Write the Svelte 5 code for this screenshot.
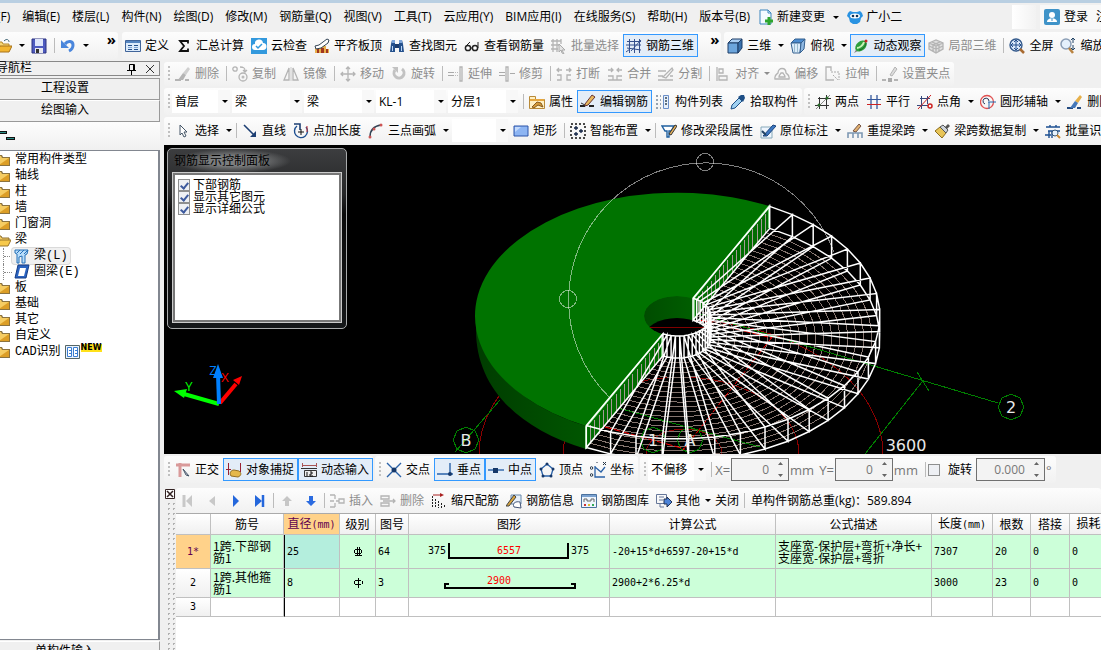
<script lang="ts">
	interface Tool {
		icon?: string,
		text?: string,
		on?: boolean,
		off?: boolean,
		drop?: boolean,
		sep?: boolean,
		combo?: string,
		size?: string
	}

	const menus = ["文件(F)", "编辑(E)", "楼层(L)", "构件(N)", "绘图(D)", "修改(M)", "钢筋量(Q)", "视图(V)", "工具(T)", "云应用(Y)", "BIM应用(I)", "在线服务(S)", "帮助(H)", "版本号(B)"]

	const sep: Tool = { sep: true }

	const quickBar: Tool[] = [
		{ icon: "page" },
		{ icon: "open", drop: true },
		{ icon: "save" },
		sep,
		{ icon: "undo", drop: true }
	]

	const mainBar: Tool[] = [
		{ icon: "define", text: "定义" },
		{ icon: "sum", text: "汇总计算" },
		{ icon: "cloud", text: "云检查" },
		{ icon: "level", text: "平齐板顶" },
		{ icon: "find", text: "查找图元" },
		{ icon: "glasses", text: "查看钢筋量" },
		{ icon: "batch", text: "批量选择", off: true },
		{ icon: "rebar3d", text: "钢筋三维", on: true }
	]

	const viewBar: Tool[] = [
		{ icon: "cube", text: "三维", drop: true },
		{ icon: "top", text: "俯视", drop: true },
		{ icon: "orbit", text: "动态观察", on: true },
		{ icon: "part", text: "局部三维", off: true },
		sep,
		{ icon: "full", text: "全屏" },
		{ icon: "zoom", text: "缩放" }
	]

	const editBar: Tool[] = [
		{ icon: "brush", text: "删除", off: true },
		sep,
		{ icon: "copy", text: "复制", off: true },
		{ icon: "mirror", text: "镜像", off: true },
		sep,
		{ icon: "move", text: "移动", off: true },
		{ icon: "rotate", text: "旋转", off: true },
		sep,
		{ icon: "extend", text: "延伸", off: true },
		{ icon: "trim", text: "修剪", off: true },
		sep,
		{ icon: "break", text: "打断", off: true },
		{ icon: "merge", text: "合并", off: true },
		{ icon: "split", text: "分割", off: true },
		sep,
		{ icon: "align", text: "对齐", off: true, drop: true },
		{ icon: "offset", text: "偏移", off: true },
		{ icon: "stretch", text: "拉伸", off: true },
		sep,
		{ icon: "grip", text: "设置夹点", off: true }
	]

	const partBar: Tool[] = [
		{ combo: "首层", size: "narrow" },
		{ combo: "梁" },
		{ combo: "梁" },
		{ combo: "KL-1" },
		{ combo: "分层1" },
		sep,
		{ icon: "props", text: "属性" },
		{ icon: "pencil", text: "编辑钢筋", on: true },
		{ icon: "list", text: "构件列表" },
		{ icon: "picker", text: "拾取构件" }
	]

	const axisBar: Tool[] = [
		{ icon: "twopoint", text: "两点" },
		{ icon: "parallel", text: "平行" },
		{ icon: "angle", text: "点角", drop: true },
		{ icon: "arcaxis", text: "圆形辅轴", drop: true },
		{ icon: "brushc", text: "删除辅轴" }
	]

	const drawBar: Tool[] = [
		{ icon: "cursor", text: "选择", drop: true },
		sep,
		{ icon: "line", text: "直线" },
		{ icon: "pointlen", text: "点加长度" },
		{ icon: "arc", text: "三点画弧", drop: true },
		{ combo: " ", size: "narrow" },
		{ icon: "rect", text: "矩形" },
		sep,
		{ icon: "smart", text: "智能布置", drop: true },
		sep,
		{ icon: "beamedit", text: "修改梁段属性" },
		{ icon: "note", text: "原位标注", drop: true },
		{ icon: "span", text: "重提梁跨", drop: true },
		{ icon: "sweep", text: "梁跨数据复制", drop: true },
		{ icon: "recog", text: "批量识别" }
	]

	const snapBar: Tool[] = [
		{ icon: "ortho", text: "正交" },
		{ icon: "snap", text: "对象捕捉", on: true },
		{ icon: "dyn", text: "动态输入", on: true }
	]

	const pointBar: Tool[] = [
		{ icon: "cross", text: "交点" },
		{ icon: "perp", text: "垂点", on: true },
		{ icon: "mid", text: "中点", on: true },
		{ icon: "vertex", text: "顶点" },
		{ icon: "coord", text: "坐标" }
	]

	const rebarBar: Tool[] = [
		{ icon: "first", off: true },
		{ icon: "prev", off: true },
		{ icon: "next" },
		{ icon: "last" },
		sep,
		{ icon: "up", off: true },
		{ icon: "down" },
		sep,
		{ icon: "insert", text: "插入", off: true },
		{ icon: "delrow", text: "删除", off: true },
		{ icon: "scale", text: "缩尺配筋" },
		{ icon: "info", text: "钢筋信息" },
		{ icon: "library", text: "钢筋图库" },
		{ icon: "other", text: "其他", drop: true },
		{ text: "关闭" },
		sep
	]

	const folders = ["常用构件类型", "轴线", "柱", "墙", "门窗洞", "梁", "板", "基础", "其它", "自定义", "CAD识别"]

	let checks = $state([
		{ text: "下部钢筋", value: true },
		{ text: "显示其它图元", value: true },
		{ text: "显示详细公式", value: true }
	])

	const columns = [
		{ text: "", width: 35 },
		{ text: "筋号", width: 73 },
		{ text: "直径", unit: "(mm)", width: 56 },
		{ text: "级别", width: 36 },
		{ text: "图号", width: 33 },
		{ text: "图形", width: 201 },
		{ text: "计算公式", width: 166 },
		{ text: "公式描述", width: 156 },
		{ text: "长度", unit: "(mm)", width: 61 },
		{ text: "根数", width: 38 },
		{ text: "搭接", width: 39 },
		{ text: "损耗", unit: "(%)", width: 56 }
	]

	const rows = [
		{ no: "1*", name: "1跨.下部钢\n筋1", dia: "25", grade: 3, shape: "64", formula: "-20+15*d+6597-20+15*d", desc: "支座宽-保护层+弯折+净长+\n支座宽-保护层+弯折", rest: ["7307", "20", "0", "0"] },
		{ no: "2", name: "1跨.其他箍\n筋1", dia: "8", grade: 1, shape: "3", formula: "2900+2*6.25*d", desc: "", rest: ["3000", "23", "0", "0"] }
	]

	// Slab with a hole: upper rim ellipse, hole ellipse and the thickness between top and bottom
	const CX = 678, CY = 316, RX = 202, RY = 123, HX = 33, HY = 20, DEPTH = 22

	const point = (deg: number, k: number, z: number): string => {
		const t = deg * Math.PI / 180
		const rx = HX + (RX - HX) * k
		const ry = HY + (RY - HY) * k
		return `${(CX + rx * Math.cos(t)).toFixed(1)} ${(CY + ry * Math.sin(t) + z).toFixed(1)}`
	}

	const angles = Array.from({ length: 25 }, (_, i) => -63 + i * 7.5)
	const ring = (k: number, z: number): string => "M" + angles.map(a => point(a, k, z)).join("L")

	const spokes = angles.map(a =>
		`M${point(a, 0, 0)}L${point(a, 1, 0)}L${point(a, 1, DEPTH)}L${point(a, 0, DEPTH)}Z`
	).join("")
	const rims = [[0, 0], [0, DEPTH], [1, 0], [1, DEPTH]].map(([k, z]) => ring(k, z)).join("")
	const stirrups = Array.from({ length: 20 }, (_, i) => ring((i + 1) / 21, DEPTH)).join("")

	const hatch = (x1: number, y1: number, x2: number, y2: number): string => {
		let d = ""
		for (let i = 1; i < 18; i++) {
			const x = Math.round(x1 + (x2 - x1) * i / 18)
			const y = Math.round(y1 + (y2 - y1) * i / 18)
			d += `M${x} ${y + 3}V${y + DEPTH}`
		}
		return d
	}

	const g = `fill="none" stroke="#b4b4b4" stroke-width="1.3"`
	const b = `fill="none" stroke="#1d4f91" stroke-width="1.4"`
	const brushShape = (c1: string, c2: string, c3: string) => `<path d="M0 14h6M10 14h4" stroke="${c3}" stroke-width="2"/><path d="M8 7l5-6 2 2-4 6z" fill="${c1}"/><path d="M8 7l3 2-3 5H3z" fill="${c2}"/>`

	const icons: { [name: string]: string } = {
		page: `<path d="M3 1h7l3 3v11H3z" fill="#fff" stroke="#789"/>`,
		open: `<path d="M1 14V4h5l1 2h6v3" fill="#f7d674" stroke="#b5862a"/><path d="M1 14l3-6h12l-3 6z" fill="#f2b530" stroke="#a87318"/><path d="M8 3c3-3 5-1 5 1" fill="none" stroke="#467"/>`,
		save: `<path d="M1 1h14v14H1z" fill="#4e5bc0" stroke="#2c3280"/><path d="M4 1h8v7H4z" fill="#dfe6fa"/><path d="M4 10h8v5H4z" fill="#e8e8f0"/><path d="M5 11h3v4H5z" fill="#333"/>`,
		undo: `<path d="M5 6c3-4 8-3 8 1 0 3-2 5-4 6" fill="none" stroke="#4a86dc" stroke-width="3"/><path d="M1 2v8h8z" fill="#4a86dc"/>`,
		define: `<path d="M.5 2.5h15v11H.5z" fill="#dcebfb" stroke="#41659a"/><path d="M1 3h14v2H1z" fill="#5585c0"/><path d="M3 7.500h4M3 11.500h4M9 7.500h4M9 11.500h4" stroke="#234f8a"/><path d="M3 9.500h4M9 9.500h4" stroke="#7fa6d6"/>`,
		sum: `<path d="M12 5.500V3H4l4 5-4 5h8v-2.500" fill="none" stroke="#111" stroke-width="1.8"/>`,
		cloud: `<path d="M0 0h16v16H0z" fill="#3399dd"/><path d="M4 12a3 3 0 010-6 4 4 0 018-1 3 3 0 010 7z" fill="#fff"/><path d="M5 8l2 2 4-4" fill="none" stroke="#39d" stroke-width="1.500"/>`,
		level: `<path d="M1 15V10l3-2h8v3h3v4z" fill="#e7b04b"/><path d="M3 15v-4h2v4M7 15v-5h3v5M12 15v-4h2v4" fill="#a2371f"/><path d="M1 8l4-1 8-6 2 1-1 3-7 5-5 1z" fill="#fff" stroke="#345"/>`,
		find: `<path d="M1 14l1-8 1-4h3v12zM10 14V2h3l1 4 1 8z" fill="#24508c"/><path d="M3 2h3v3H3zM10 2h3v3h-3z" fill="#7ba3d8"/><path d="M6 6h4v4H6z" fill="#1c3c6c"/><path d="M3.500 8v5M12.500 8v5" stroke="#b9d4f5"/>`,
		glasses: `<circle cx="4" cy="10" r="2.6" fill="#fff" stroke="#222" stroke-width="1.5"/><circle cx="11" cy="10" r="2.6" fill="#fff" stroke="#222" stroke-width="1.5"/><path d="M6 10h3M2 8l4-4M14 10V4" fill="none" stroke="#222"/>`,
		batch: `<path d="M0 3h10M0 7h8M0 11h7M2 1v13M6 1v13M10 1v5" ${g}/><path d="M8 6l6 6h-3l2 4-2-1-1-3-2 2z" fill="#e4e4e4" stroke="#aaa"/>`,
		rebar3d: `<path d="M1 3.500h14M1 10l14 2M3.500 1v14M8.500 1v14M13.500 1v14M0 14l4-3M5 13l10-11M0 7h15" fill="none" stroke="#35508c"/>`,
		cube: `<path d="M1 5l4-4h10l-4 4z" fill="#a9cdf2" stroke="#1d3d66"/><path d="M1 5h10v10H1z" fill="#6ca5dc" stroke="#1d3d66"/><path d="M11 5l4-4v9l-4 5z" fill="#3b71ab" stroke="#1d3d66"/>`,
		top: `<path d="M1 5l4-4h10l-4 4z" fill="#4c8cd0" stroke="#35608f"/><path d="M1 5h10l-1 10H3z" fill="#dcecfb" stroke="#35608f"/><path d="M11 5l4-4-1 10-4 4z" fill="#8fb8e2" stroke="#35608f"/><path d="M4.500 6v8M7.500 6v8" stroke="#9bc"/>`,
		orbit: `<path d="M1 15l3-5 3 2z" fill="#888"/><ellipse cx="8" cy="8" rx="6.500" ry="4.5" transform="rotate(-40 8 8)" fill="#2f9f3c"/><path d="M4 10c3 0 6-3 7-6" stroke="#c8f2b8" fill="none" stroke-width="2"/><path d="M6 12c3 0 7-4 7-7" stroke="#17632a" fill="none"/><circle cx="13" cy="3" r="1.500" fill="#c22"/>`,
		part: `<path d="M1 5l7-3 7 3v6l-7 4-7-4z" fill="#e0e0e0"/><path d="M1 5l7-3 7 3v6l-7 4-7-4zM1 5l7 3 7-3M8 8v7M1 8l7 3 7-3M4 4l7 3v7M12 4L5 7v6" ${g}/>`,
		full: `<circle cx="7" cy="7" r="6" fill="#dcebfc" stroke="#345a8c" stroke-width="1.4"/><path d="M7 2v10M2 7h10M5 4l2-2 2 2M5 10l2 2 2-2M4 5L2 7l2 2M10 5l2 2-2 2" stroke="#234f8c" fill="none"/><path d="M11 11l4 4" stroke="#a86a30" stroke-width="2.5"/>`,
		zoom: `<circle cx="6" cy="6" r="5" fill="#e4f0fc" stroke="#8a9db5" stroke-width="1.5"/><path d="M9 10l4 5" stroke="#b98340" stroke-width="2.5"/><path d="M13 0v5M11 2l2-2 2 2M13 7v5M11 10l2 2 2-2" stroke="#246" fill="none"/>`,
		brush: brushShape("#d0d0d0", "#b4b4b4", "#b4b4b4"),
		brushc: brushShape("#e6b04a", "#4477b8", "#234a80"),
		copy: `<circle cx="3" cy="3" r="2.2" ${g}/><circle cx="11" cy="11" r="4" ${g}/><circle cx="11" cy="11" r="1.5" fill="#bbb"/><path d="M8 1c4 0 5 1 5 4M11 4l2 2 2-2" ${g}/>`,
		mirror: `<path d="M6 2v12H1zM10 2v12h5z" ${g}/><path d="M8 1v14" stroke="#ccc"/>`,
		move: `<path d="M8 1v14M1 8h14M6 3l2-2 2 2M6 13l2 2 2-2M3 6L1 8l2 2M13 6l2 2-2 2" ${g}/>`,
		rotate: `<path d="M4 4a5 5 0 107-1" fill="none" stroke="#c2c2c2" stroke-width="3"/><path d="M1 1h6v6z" fill="#c2c2c2"/>`,
		extend: `<path d="M0 6.500h6M0 9.500h6" stroke="#aaa"/><path d="M7 6.500h3M7 9.500h3" stroke="#bbb" stroke-dasharray="1 1"/><path d="M12 1h2v14h-2z" ${g}/>`,
		trim: `<path d="M0 6.500h6M0 9.500h6M11 7.500h5" stroke="#aaa"/><path d="M7 1h2v14H7z" ${g}/>`,
		break: `<path d="M1 9h4v5H1M15 9h-4v5h4M1 4h5M15 4h-5M3 2L1 4l2 2M13 2l2 2-2 2" ${g}/>`,
		merge: `<path d="M1 14h14M1 10h5v4M15 10h-5v4M1 4h5M15 4h-5M4 2l2 2-2 2M12 2l-2 2 2 2" ${g}/>`,
		split: `<path d="M0 5h8M0 14h15M0 10h5M12 10h3M5 11l9-9 1 2-7 8z" ${g}/>`,
		align: `<path d="M2 1v14M4 3h4v4H4zM4 10h8v4H4z" ${g}/>`,
		offset: `<path d="M1 13c-1-4 2-5 3-6 0-6 8-6 8 0 1 1 4 2 3 6zM5 11c0-2 1-2 2-4h2c1 2 2 2 2 4z" ${g}/>`,
		stretch: `<path d="M9 14H1V1h5v4" ${g}/><path d="M6 6h8v8M8 9l5 5" fill="none" stroke="#aaa" stroke-dasharray="2 1"/>`,
		grip: `<path d="M0 14h4M12 14h4" stroke="#b4b4b4" stroke-width="2"/><path d="M6 12h4v4H6z" fill="#aaa"/><path d="M8 9l5-8 2 2-5 7z" fill="#ddd" stroke="#b4b4b4"/>`,
		props: `<path d="M.5 2.5h6v3h9v9H.5z" fill="#fff0c4" stroke="#b98a38"/><path d="M1 5h14v2H1z" fill="#e5a740"/><path d="M3 13l5-5 4 1 2 4-5-2-4 3z" fill="#d59b3c" stroke="#865a1b"/>`,
		pencil: `<path d="M0 12h5M9 12h5" stroke="#222" stroke-width="2"/><path d="M5 10l7-9 3 2-7 8-3 1z" fill="#e7b85c" stroke="#633"/><path d="M1 9l4 2" stroke="#333"/>`,
		list: `<path d="M1 2h2M1 6h2M1 10h2M1 14h2M5 2h1M5 6h1M5 10h1M5 14h1" stroke="#789" stroke-width="1.500"/><path d="M8.500 1.500h5v13h-5z" fill="#e7f0fb" stroke="#6a8fc9"/><path d="M10 4h2M10 7h2M10 10h2" stroke="#345" stroke-width="1.500"/>`,
		picker: `<path d="M1 15l1-4 7-7 3 3-7 7z" fill="#9fd0f0" stroke="#1e4f86"/><path d="M8 3l3-2h3l1 3-2 4z" fill="#1e4f86"/>`,
		twopoint: `<path d="M0 11.500h14M3 4.500h13M4.500 3v12M11.500 1v14" stroke="#333" fill="none"/><path d="M1 15L15 1" stroke="#888"/><circle cx="12" cy="4" r="1.500" fill="#286a28"/><circle cx="4" cy="11" r="1.500" fill="#286a28"/>`,
		parallel: `<path d="M5 1v14M11 1v14" stroke="#35589c" stroke-width="1.300"/><path d="M1 5.500h14" stroke="#35589c"/><path d="M1 10.500h14" stroke="#c22"/>`,
		angle: `<path d="M0 11.500h11M3 4.500h10M4.500 2v13M10.500 2v8" stroke="#35487c"/><path d="M1 15L14 1" stroke="#c22"/><circle cx="13" cy="12" r="2" fill="none" stroke="#c22" stroke-width="1.500"/>`,
		arcaxis: `<circle cx="7" cy="8" r="6.500" fill="none" stroke="#e05050" stroke-width="1.300"/><path d="M5 10a3 3 0 114-3" fill="none" stroke="#235"/><path d="M8 8h8M9 8v7" stroke="#26a"/>`,
		cursor: `<path d="M5 2v10l2-2 2 4 2-1-2-4h3z" fill="#fff" stroke="#456"/>`,
		line: `<path d="M2 2l10 10" stroke="#1d3f73" stroke-width="1.600"/><path d="M14 14H8l6-6z" fill="#1d3f73"/>`,
		pointlen: `<path d="M4 3a6.500 6.500 0 109 1" ${b}/><path d="M1 1h6v6" fill="none" stroke="#1d3f73" stroke-width="1.600"/><path d="M8 6v6M5 9h6" stroke="#111"/><path d="M14 3v6" stroke="#c33"/>`,
		arc: `<path d="M2 14C2 7 6 3 13 2" fill="none" stroke="#345" stroke-width="1.500"/><circle cx="2" cy="14" r="1.500" fill="#c55"/><circle cx="6" cy="6" r="1.500" fill="#c55"/><circle cx="13" cy="2" r="1.500" fill="#c55"/>`,
		rect: `<path d="M1 3h14v10H1z" fill="#8db5f3" stroke="#2c55a8"/><path d="M2 4h6l-6 5z" fill="#c3dafc"/>`,
		smart: `<path d="M1 1h14v14H1z" fill="none" stroke="#111" stroke-dasharray="2 2" stroke-width="1.500"/><path d="M6 3v4M4 5h4M11 6v4M9 8h4M6 9v4M4 11h4" stroke="#124" stroke-width="1.300"/>`,
		beamedit: `<path d="M1 3h12l-3 5H8v6H6V8H4z" fill="#fff" stroke="#1e5f9f" stroke-width="1.400"/><path d="M8 11l6-9 2 1-6 9z" fill="#e8b35c" stroke="#333"/>`,
		note: `<path d="M1 4h11v11H1z" fill="#eef5fd" stroke="#8ab"/><path d="M3 13L13 2l3 1L7 13z" fill="#3d78c2" stroke="#1a437c"/><path d="M2 8l4 4" stroke="#246" stroke-width="2"/>`,
		span: `<path d="M1 15v-5h14v5M6 10v5M11 10v5" fill="none" stroke="#7d98b3" stroke-width="1.600"/><path d="M6 8l6-7 2 2-5 6z" fill="#e0b070" stroke="#754"/>`,
		sweep: `<path d="M1 8l5-4 6 6-4 5z" fill="#e8c558" stroke="#8b6d1c"/><path d="M6 4l3-2 5 5-2 3z" fill="#ccd3da" stroke="#555"/><path d="M11 4l3-3 2 2-3 3z" fill="#555"/>`,
		recog: `<path d="M1 4h14M3 8h12M0 12h6M5 2v2M11 2v2M4 8v7M7 8v7" ${b}/><circle cx="10" cy="10" r="3" fill="#e6f2fd" stroke="#357"/><path d="M12 12l3 3" stroke="#c83" stroke-width="2"/>`,
		ortho: `<path d="M1 3h14M5 1v14" stroke="#d99a9a" stroke-width="3"/><path d="M8 7l6 7-3-1z" fill="#dde" stroke="#456"/>`,
		snap: `<path d="M2.500 1v12M14.500 1v9M0 7.500h5" stroke="#923"/><path d="M5 14c-2-3 0-6 3-6l5 1c3 2 2 5-1 6z" fill="#e5b84a" stroke="#957024"/>`,
		dyn: `<path d="M1.500 1v4M15.500 1v4M1 3.500h14" stroke="#a55"/><path d="M0 6.500h16M3.500 8.500h12v6h-12z" fill="#eee" stroke="#333"/><path d="M6 10v4M9 10h2v2H9v2h3" fill="none" stroke="#111"/>`,
		cross: `<path d="M1 1l14 14M15 1L1 15" stroke="#2a62a8" stroke-width="1.400"/><circle cx="8" cy="8" r="2.500" fill="#16386a"/>`,
		perp: `<path d="M0 12h16M13 1v11" stroke="#2a62a8" stroke-width="1.400"/><circle cx="13" cy="12" r="2" fill="#16386a"/>`,
		mid: `<path d="M0 8h16" stroke="#2a62a8" stroke-width="1.400"/><path d="M5 6h5v5H5z" fill="#16386a"/>`,
		vertex: `<path d="M8 2l6 5-2 7H4L2 7z" fill="none" stroke="#2a62a8" stroke-width="1.300"/><circle cx="8" cy="2" r="1.500" fill="#16386a"/><circle cx="14" cy="7" r="1.500" fill="#16386a"/><circle cx="12" cy="14" r="1.500" fill="#16386a"/><circle cx="4" cy="14" r="1.500" fill="#16386a"/><circle cx="2" cy="7" r="1.500" fill="#16386a"/>`,
		coord: `<path d="M5 4v11h10M5 5l6 5 4-5" fill="none" stroke="#2a62a8" stroke-width="1.300"/><circle cx="1.500" cy="6" r="1.300" fill="none" stroke="#234"/><circle cx="1.500" cy="13" r="1.300" fill="none" stroke="#234"/><path d="M6 0h2M13 0l3 3M16 0l-3 3" stroke="#234"/>`,
		first: `<path d="M4 2v12" stroke="#c8c8c8" stroke-width="3"/><path d="M12 2v12L6 8z" fill="#c8c8c8"/>`,
		prev: `<path d="M11 3v10L5 8z" fill="#c8c8c8"/>`,
		next: `<path d="M5 2v12l6-6z" fill="#2467dc"/>`,
		last: `<path d="M3 2v12l7-6z" fill="#2467dc"/><path d="M11 2v12" stroke="#2467dc" stroke-width="2.500"/>`,
		up: `<path d="M8 3l5 5h-3v5H6V8H3z" fill="#c6c6c6"/>`,
		down: `<path d="M8 13L3 8h3V3h4v5h3z" fill="#2b6be0"/>`,
		insert: `<path d="M1 2h5M1 14h5M1 8h4M7 8h3M10 6h5v4h-5zM6 2v4M6 10v4" ${g}/>`,
		delrow: `<path d="M1 3h8v3H1zM1 10h8v3H1zM3 8h12M13 6l2 2-2 2" ${g}/>`,
		scale: `<path d="M1.500 3v12M4.500 6v9M7.500 8v7M10.500 10v5M13.500 12v3" stroke="#222" stroke-dasharray="2 1"/><path d="M2 2h9" stroke="#a22"/><path d="M9 0l4 2-4 2z" fill="#a22"/>`,
		info: `<path d="M5 2h10v9H5z" fill="#e8f1fb" stroke="#68a"/><path d="M8 14c-2-4 2-6 6-5l1 6z" fill="#fff" stroke="#457"/><path d="M0 13L8 2l2 2-7 9z" fill="#d8a53e" stroke="#444"/>`,
		library: `<path d="M.5 1.500h15v13H.5z" fill="#eef5fd" stroke="#4b719e"/><path d="M1 2h14v2H1z" fill="#7ba2d0"/><path d="M3 9V6h3v2h4V6h3v3" fill="none" stroke="#666"/><path d="M3 12h2" stroke="#c33" stroke-width="2"/><path d="M7 12h2" stroke="#db3" stroke-width="2"/><path d="M11 12h2" stroke="#3a5" stroke-width="2"/>`,
		other: `<path d="M.5 1.500h10v9H.5zM3 4h5M3 7h4M4 11v3h4" fill="none" stroke="#679"/><path d="M8 6h3V4l5 5-5 5v-3H8z" fill="#4c83d8" stroke="#235"/>`,
		newdoc: `<path d="M2 1h8l3 3v11H2z" fill="#f4faff" stroke="#3c86be"/><path d="M10 1v3h3" fill="none" stroke="#3c86be"/><path d="M11 8v8M7 12h8" stroke="#2da52d" stroke-width="3"/>`,
		robot: `<path d="M0 7l1-3 2-2 3 1h4l3-1 2 2 1 3-2 2-1 4-3 2H6l-3-2-1-4z" fill="#2a93e2"/><ellipse cx="8" cy="7" rx="5" ry="2.500" fill="#fff"/><circle cx="6" cy="7" r="1.300" fill="#135"/><circle cx="10" cy="7" r="1.300" fill="#135"/>`,
		user: `<rect width="16" height="16" rx="2" fill="#3f93c8"/><circle cx="8" cy="6" r="3" fill="#fff"/><path d="M3 13c0-5 10-5 10 0z" fill="#fff"/><path d="M8 9v3" stroke="#3f93c8"/>`,
		folder: `<path d="M0 3h7l1 2h7v9H0z" fill="#8b7340"/><path d="M0 4h6l1 2h7v7H0z" fill="#f5cc62"/><path d="M14 6v7H4z" fill="#dc9e26"/>`,
		folderopen: `<path d="M1 13V4h5l1 2h7v2" fill="#f4cd66" stroke="#8b6d2c"/><path d="M1 14l4-6h11l-3 6z" fill="#f7c94b" stroke="#9a762a"/>`,
		beam: `<path d="M1 2l13 0-1 4-2 1v8H8V8L5 9v6H3V6L1 5z" fill="#b9ddfa" stroke="#2470b8"/><path d="M3 5l3-3M6 6l4-4M10 6l4-4" stroke="#2470b8"/>`,
		ringbeam: `<path d="M4 1h11l-3 13H1z" fill="#2a63c0" stroke="#143c86"/><path d="M6 4h6l-2 8H4z" fill="#fff"/>`,
		cad: `<path d="M.5 1.500h14v13H.5z" fill="#eaf3fe" stroke="#566"/><path d="M2.500 3.500h4v9h-4zM8.500 3.500h4v9h-4z" fill="#fff" stroke="#3a7dd0"/><path d="M4 6.500h2M4 9.500h2M10 6.500h2M10 9.500h2" stroke="#3a7dd0"/>`
	}
</script>

{#snippet icon(name: string)}
	<svg class="icon" viewBox="0 0 16 16" aria-hidden="true">{@html icons[name]}</svg>
{/snippet}

{#snippet arrow()}
	<svg class="arrow" viewBox="0 0 6 3" aria-hidden="true"><path d="M0 0h6L3 3z" fill="currentColor" /></svg>
{/snippet}

{#snippet combo(value: string, size: string)}
	<span class="combo {size}">
		<select aria-label={value}><option>{value}</option></select>
		{@render arrow()}
	</span>
{/snippet}

{#snippet tools(items: Tool[])}
	{#each items as item}
		{#if item.sep}
			<span class="sep"></span>
		{:else if item.combo}
			{@render combo(item.combo, item.size ?? "")}
		{:else}
			<button class="tool" class:on={item.on} class:off={item.off} aria-label={item.text ?? item.icon}>
				{#if item.icon}{@render icon(item.icon)}{/if}
				{#if item.text}<span>{item.text}</span>{/if}
			</button>
			{#if item.drop}
				<span class="drop" class:off={item.off}>{@render arrow()}</span>
			{/if}
		{/if}
	{/each}
{/snippet}

{#snippet spin(label: string, value: string, wide: boolean)}
	<span class="spin" class:wide>
		<input type="text" {value} aria-label={label} />
		<svg viewBox="0 0 7 17" aria-hidden="true"><path d="M1 4h5L3.500 1zM1 13h5L3.500 16z" fill="#666" /></svg>
	</span>
{/snippet}

<div class="window">
	<nav class="menu">
		<div class="menus">
			{#each menus as menu}
				<button>{menu}</button>
			{/each}
		</div>
		<button>{@render icon("newdoc")}新建变更</button>
		<span class="drop">{@render arrow()}</span>
		<button>{@render icon("robot")}广小二</button>
		<span class="blank"></span>
		<div class="login">{@render icon("user")}<a href="#login">登录</a><a href="#register">注册</a></div>
	</nav>

	<div class="row first">
		<div class="bar quick">{@render tools(quickBar)}<span class="more">»</span></div>
		<div class="bar main">{@render tools(mainBar)}<span class="more">»</span></div>
		<div class="bar grow">{@render tools(viewBar)}</div>
	</div>

	<div class="body">
		<aside>
			<header>
				<span>导航栏</span>
				<svg viewBox="0 0 30 12" aria-hidden="true"><path d="M3.500 7V1.500h5V7M1 7.500h9M5.500 8v4M7.500 2v5" stroke="#000" fill="none" /><path d="M20 2l8 8M28 2l-8 8" stroke="#333" /></svg>
			</header>
			<button class="section">工程设置</button>
			<button class="section">绘图输入</button>
			<div class="modes">
				<svg viewBox="0 0 20 12" aria-hidden="true"><path d="M0 1h11v3H0zM10 7h9v3h-9z" fill="#111" /><path d="M1 2h9v1H1zM11 8h7v1h-7z" fill="#2b8f88" /></svg>
			</div>
			<ul class="tree">
				{#each folders as folder}
					<li>
						{@render icon(folder == "梁" ? "folderopen" : "folder")}<span>{folder}</span>
						{#if folder == "CAD识别"}
							{@render icon("cad")}<b>NEW</b>
						{/if}
					</li>
					{#if folder == "梁"}
						<li class="child"><button class="picked">{@render icon("beam")}<span>梁(L)</span></button></li>
						<li class="child"><button>{@render icon("ringbeam")}<span>圈梁(E)</span></button></li>
					{/if}
				{/each}
			</ul>
			<button class="section last">单构件输入</button>
		</aside>

		<main>
			<div class="row edit"><div class="bar"><i class="grip"></i>{@render tools(editBar)}</div></div>
			<div class="row">
				<div class="bar"><i class="grip"></i>{@render tools(partBar)}</div>
				<div class="bar grow after"><i class="grip"></i>{@render tools(axisBar)}</div>
			</div>
			<div class="row"><div class="bar grow"><i class="grip"></i>{@render tools(drawBar)}</div></div>

			<div class="view">
				<svg viewBox="164 145 937 309" preserveAspectRatio="xMinYMin slice" role="img" aria-label="钢筋三维">
					<defs>
						<clipPath id="hole"><ellipse cx="677" cy="316" rx="33" ry="20" /></clipPath>
						<clipPath id="solid"><path d="M630 280H694V360H630z" /></clipPath>
						<linearGradient id="wall"><stop offset="0" stop-color="#004c00" /><stop offset="1" stop-color="#006400" /></linearGradient>
						<linearGradient id="side"><stop offset="0" stop-color="#003c00" /><stop offset="1" stop-color="#005600" /></linearGradient>
					</defs>
					<g fill="none" stroke="#8b0000" shape-rendering="crispEdges">
						<ellipse cx="681" cy="454" rx="202" ry="134" />
						<ellipse cx="681" cy="454" rx="118" ry="77" />
						<ellipse cx="684" cy="454" rx="38" ry="25" />
					</g>
					<path d={stirrups} fill="none" stroke="#85756f" stroke-width="1" shape-rendering="crispEdges" />
					<g fill="none" stroke="#008000" shape-rendering="crispEdges">
						<path d="M455 452L500 400M700 314L998 403M922 382L865 454M917 372l12 19M614 407L760 447" />
						<path d="M466 427l9 4 4 9-4 9-9 4-9-4-4-9 4-9zM653 427l9 4 4 9-4 9-9 4-9-4-4-9 4-9zM690 427l9 4 4 9-4 9-9 4-9-4-4-9 4-9zM1011 394l9 4 4 9-4 9-9 4-9-4-4-9 4-9z" />
					</g>
					<path d="M773 336L683 450M605 427L685 449M700 320L772 338" fill="none" stroke="#f00" stroke-dasharray="7 2" />
					<path d="M476 316A202 123 0 0 0 586 426V449C515 428 476 385 476 330z" fill="url(#side)" />
					<path d="M769 206A202 123 0 1 0 586 426L662 335L693 298z" fill="#007300" />
					<g clip-path="url(#hole)">
						<ellipse cx="677" cy="316" rx="33" ry="20" clip-path="url(#solid)" fill="url(#wall)" />
						<ellipse cx="677" cy="338" rx="33" ry="20" />
					</g>
					<path d="M769 206V228L694 320V298zM662 335V357L586 449V427z" fill="#006b00" />
					<path d={hatch(769, 206, 694, 298) + hatch(662, 335, 586, 427)} stroke="#a59b96" shape-rendering="crispEdges" />
					<path d="M694 320V298L769 206V228M662 357V335L586 427V449" fill="none" stroke="#a0f0a0" stroke-width="1.500" />
					<path d="M650 327.500H706" stroke="#800000" />
					<path d={spokes + rims} fill="none" stroke="#fff" stroke-width="1.500" />
					<g fill="none" stroke="#fff" stroke-opacity=".5" shape-rendering="crispEdges">
						<path d="M834 252A137 137 0 1 0 610 398" />
						<circle cx="705" cy="162" r="8.500" />
						<circle cx="568" cy="299" r="8.500" />
					</g>
					<g class="labels">
						<text x="466" y="446">B</text>
						<text x="653" y="446">1</text>
						<text x="690" y="446">A</text>
						<text x="1011" y="413">2</text>
						<text x="906" y="451">3600</text>
					</g>
					<g stroke-width="4">
						<path d="M219 404L184 394" stroke="#0f0" /><path d="M174 391l13-2-3 9z" fill="#0f0" />
						<path d="M220 403L236 384" stroke="#f00" /><path d="M242 376l-9 4 6 5z" fill="#f00" />
						<path d="M219 404L218 374" stroke="#0080ff" /><path d="M218 364l-5 14h10z" fill="#0080ff" />
					</g>
					<g class="axes"><text x="189" y="391" fill="#0f0">Y</text><text x="213" y="375" fill="#0080ff">Z</text><text x="225" y="382" fill="#f00">X</text></g>
				</svg>
				<section class="panel">
					<h2>钢筋显示控制面板</h2>
					<div class="checks">
						{#each checks as check}
							<label><input type="checkbox" bind:checked={check.value} />{check.text}</label>
						{/each}
					</div>
				</section>
			</div>

			<div class="row snap">
				<div class="bar"><i class="grip"></i>{@render tools(snapBar)}</div>
				<div class="bar after"><i class="grip"></i>{@render tools(pointBar)}</div>
				<div class="bar after">
					<i class="grip"></i>{@render combo("不偏移", "narrow")}<span class="sep"></span>
					<span class="gray">X=</span>{@render spin("X", "0", false)}<span class="gray">mm</span>
					<span class="gray">Y=</span>{@render spin("Y", "0", false)}<span class="gray">mm</span>
					<span class="sep"></span>
					<label class="turn"><input type="checkbox" />旋转</label>
					{@render spin("旋转", "0.000", true)}<span class="gray">°</span>
				</div>
			</div>

			<div class="rebar">
				<div class="splitter">
					<svg viewBox="0 0 10 10" aria-hidden="true"><path d="M.5.500h9v9h-9z" fill="#fff" stroke="#322" /><path d="M2 2l6 6M8 2L2 8" stroke="#322" stroke-width="1.500" /></svg>
					<div class="dots"></div>
				</div>
				<div class="sheet">
					<div class="bar nav">{@render tools(rebarBar)}<span class="total">单构件钢筋总重(kg)：589.894</span></div>
					<div class="grid">
						<table>
							<colgroup>
								{#each columns as column}<col style="width: {column.width}px" />{/each}
							</colgroup>
							<thead>
								<tr>
									{#each columns as column, i}
										<th class:hot={i == 2}>{column.text}{#if column.unit}<span class="mono">{column.unit}</span>{/if}</th>
									{/each}
								</tr>
							</thead>
							<tbody>
								{#each rows as row, i}
									<tr class="filled" class:tall={i == 0}>
										<th class="mono" class:hot={i == 0}>{row.no}</th>
										<td class="name">{row.name}</td>
										<td class="mono edge" class:current={i == 0}>{row.dia}</td>
										<td class="grade">
											<svg viewBox="0 0 12 12" role="img" aria-label="级别"><path d={row.grade == 3 ? "M3 3.5h6M3 7.5h6M2.5 4v3M9.500 4v3M5.500 1v9M7.500 1v9M3 9.500h7" : "M3 3.500h6M3 7.500h6M2.500 4v3M10.500 4v3M6.500 1v10"} fill="none" stroke="#000" /></svg>
										</td>
										<td class="mono">{row.shape}</td>
										<td class="shape">
											<svg viewBox="0 0 200 28">
												{#if i == 0}
													<path d="M40 5V20H159V5" fill="none" stroke="#000" stroke-width="2" />
													<text x="28" y="16">375</text>
													<text x="100" y="16" class="red">6557</text>
													<text x="171" y="16">375</text>
												{:else}
													<path d="M40 15H36V19H166V15H162" fill="none" stroke="#000" stroke-width="2" />
													<text x="90" y="15" class="red">2900</text>
												{/if}
											</svg>
										</td>
										<td class="mono">{row.formula}</td>
										<td class="desc">{row.desc}</td>
										{#each row.rest as value}
											<td class="mono">{value}</td>
										{/each}
									</tr>
								{/each}
								<tr>
									<th class="mono">3</th>
									{#each columns.slice(1) as _, i}
										<td class:edge={i == 1}></td>
									{/each}
								</tr>
							</tbody>
						</table>
					</div>
				</div>
			</div>
		</main>
	</div>
</div>

<style>
	:global(body) {
		background: #f0f0f0;
		overflow: hidden;
	}

	/* the window sits partly past the left edge of the screen */
	.window {
		margin-left: -30px;
		height: 100vh;
		display: flex;
		flex-direction: column;
		overflow: hidden;
		box-sizing: border-box;
		border-top: 3px solid #b9cfe2;
		font: 12px/16px "Open Sans", "Noto Sans CJK SC", sans-serif;
		color: #000;
		white-space: nowrap;
	}

	button,
	input,
	select {
		font: inherit;
		color: inherit;
		margin: 0;
	}

	button {
		background: none;
		border: 0;
		padding: 0;
	}

	.icon {
		width: 16px;
		height: 16px;
		flex: none;
	}

	.arrow {
		width: 6px;
		height: 3px;
		flex: none;
	}

	.menu {
		display: flex;
		align-items: center;
		height: 28px;
		flex: none;
		padding-left: 3px;
		gap: 8px;
	}

	.menus {
		display: flex;
		gap: 12px;
	}

	.menu button {
		display: flex;
		align-items: center;
		gap: 3px;
		flex: none;
	}

	.menu .drop {
		width: 6px;
	}

	.blank {
		width: 24px;
		height: 24px;
		margin-left: auto;
		background: linear-gradient(90deg, #fff, #f2f2f2);
		flex: none;
	}

	.login {
		display: flex;
		align-items: center;
		gap: 4px;
		width: 57px;
		height: 24px;
		padding-left: 4px;
		margin-left: -4px;
		background: #f8f8f8;
		overflow: hidden;
		flex: none;
	}

	.login a {
		color: #000;
		text-decoration: none;
		margin-right: 4px;
	}

	.row {
		display: flex;
		height: 29px;
		flex: none;
		align-items: center;
		overflow: hidden;
	}

	.row.edit {
		height: 27px;
	}

	.row.snap {
		height: 31px;
	}

	.bar {
		display: flex;
		align-items: center;
		height: 27px;
		flex: none;
		background: linear-gradient(#fdfdfd, #f1f1f1);
		border-radius: 3px;
	}

	.edit .bar {
		height: 24px;
	}

	.bar.grow {
		flex: 1 0 auto;
	}

	.bar.after {
		margin-left: 2px;
	}

	.bar.quick {
		width: 148px;
		margin-right: 4px;
	}

	.bar.main {
		margin-right: 3px;
	}

	.quick .more {
		margin-left: auto;
		padding-right: 2px;
	}

	.more {
		padding: 0 2px 14px 12px;
		font-size: 15px;
		font-weight: bold;
	}

	.grip {
		width: 2px;
		height: 15px;
		margin: 0 2px 0 4px;
		background: repeating-linear-gradient(#c0c0c0 0 2px, transparent 2px 4px);
	}

	.tool {
		display: flex;
		align-items: center;
		gap: 4px;
		height: 23px;
		padding: 0 3px 0 2px;
		border: 1px solid transparent;
		flex: none;
	}

	.tool.on {
		border-color: #3399ff;
		background: #e3edf8;
	}

	.off {
		color: #8d8d8d;
	}

	.drop {
		display: flex;
		justify-content: center;
		width: 12px;
		flex: none;
	}

	.drop.off {
		width: 8px;
	}

	.sep {
		width: 1px;
		height: 15px;
		margin: 0 2px 0 3px;
		background: #bbb;
		flex: none;
	}

	.drop + .sep {
		margin-left: 1px;
	}

	.combo {
		display: grid;
		align-items: center;
		width: 70px;
		height: 23px;
		margin-right: 2px;
		background: #fff;
		flex: none;
	}

	.combo.narrow {
		width: 58px;
	}

	.drop + .combo.narrow {
		width: 56px;
	}

	.combo > :global(*) {
		grid-area: 1 / 1;
	}

	.combo select {
		appearance: none;
		width: 100%;
		height: 23px;
		padding: 0 12px 0 3px;
		border: 0;
		background: linear-gradient(90deg, #fff, #fff) 0 0 / calc(100% - 12px) 100% no-repeat, #f8f8f8;
	}

	.combo .arrow {
		justify-self: end;
		margin-right: 2px;
		pointer-events: none;
	}

	.body {
		display: flex;
		flex: 1;
		min-height: 0;
	}

	aside {
		display: flex;
		flex-direction: column;
		width: 190px;
		margin-right: 4px;
		padding-top: 1px;
		box-sizing: border-box;
		flex: none;
		font-family: "Liberation Mono", "Noto Sans CJK SC", monospace;
	}

	aside header {
		display: flex;
		align-items: center;
		justify-content: space-between;
		height: 13px;
		padding: 0 3px 0 25px;
		border: 1px solid #888;
	}

	aside header svg {
		width: 30px;
		height: 12px;
	}

	.section {
		height: 22px;
		border: 1px solid #999;
		border-top-color: #fff;
		background: #f0f0f0;
		flex: none;
	}

	header + .section {
		margin-top: 2px;
		border-top-color: #999;
	}

	.modes {
		height: 28px;
		padding: 0 26px;
		background: linear-gradient(#fdfdfd, #f0f0f0);
		display: flex;
		align-items: center;
		flex: none;
	}

	.modes svg {
		width: 20px;
		height: 12px;
	}

	.tree {
		flex: 1;
		margin: 0;
		padding: 1px 0 0 24px;
		list-style: none;
		background: #fff;
		border: 1px solid #828790;
		border-right-width: 2px;
		overflow: hidden;
	}

	.tree li {
		display: flex;
		align-items: center;
		gap: 4px;
		height: 16px;
	}

	.tree .child {
		margin-left: 8px;
		border-left: 1px dotted #888;
	}

	.tree .child::before {
		content: "";
		width: 8px;
		border-top: 1px dotted #888;
	}

	.child button {
		display: flex;
		align-items: center;
		gap: 4px;
		height: 16px;
		margin-left: -4px;
		padding: 0 2px;
	}

	.child .picked {
		border-radius: 3px;
		background: #f0f0f0;
		box-shadow: 0 0 0 1px #dadada;
	}

	.tree b {
		font: bold 8px/8px "DejaVu Sans", sans-serif;
		background: #ffe11a;
		align-self: flex-start;
		margin-left: -4px;
	}

	.section.last {
		margin-top: 1px;
		height: 22px;
		margin-bottom: -13px;
	}

	main {
		display: flex;
		flex-direction: column;
		flex: 1;
		min-width: 0;
	}

	.view {
		position: relative;
		flex: 1;
		min-height: 0;
		background: #000;
		overflow: hidden;
	}

	.view > svg {
		display: block;
		width: 100%;
		height: 100%;
	}

	.labels text {
		font: 16px "DejaVu Sans", sans-serif;
		fill: #e8e8e8;
		text-anchor: middle;
	}

	.axes text {
		font: 13px "Open Sans", sans-serif;
		text-anchor: middle;
	}

	.panel {
		position: absolute;
		left: 3px;
		top: 3px;
		display: flex;
		flex-direction: column;
		width: 180px;
		height: 181px;
		padding: 0 5px 6px;
		box-sizing: border-box;
		border: 1px solid #a9abac;
		border-radius: 5px;
		background: linear-gradient(#3c3d3f, #262728 45px, #0a0a0a 65px, #151719);
	}

	.panel h2 {
		margin: 0;
		padding: 0 1px;
		font: 12px/24px "Open Sans", "Noto Sans CJK SC", sans-serif;
		background: radial-gradient(closest-side, #7d7f80 40%, transparent) 0 0 / 118px 24px no-repeat;
	}

	.checks {
		flex: 1;
		padding: 4px 3px;
		border: 2px solid #777;
		outline: 1px solid #ccc;
		background: #fff;
	}

	.checks label {
		display: flex;
		align-items: center;
		gap: 3px;
		height: 12px;
	}

	input[type="checkbox"] {
		appearance: none;
		display: grid;
		width: 12px;
		height: 12px;
		border: 1px solid #8e8f8f;
		box-sizing: border-box;
		background: #eef0f4;
	}

	input[type="checkbox"]:checked::after {
		content: "";
		width: 3px;
		height: 6px;
		margin: auto;
		border: solid #3d5a9e;
		border-width: 0 2px 2px 0;
		transform: rotate(40deg);
	}

	.gray {
		color: #777;
		font-size: 13px;
		padding: 0 1px;
	}

	.spin {
		display: flex;
		align-items: center;
		width: 58px;
		height: 23px;
		box-sizing: border-box;
		border: 1px solid #707070;
		background: #f3f3f3;
	}

	.spin.wide {
		width: 69px;
	}

	.spin input {
		width: 100%;
		min-width: 0;
		padding: 0 8px 0 0;
		border: 0;
		background: none;
		text-align: right;
		color: #777;
	}

	.spin svg {
		width: 7px;
		height: 17px;
		margin-right: 4px;
		flex: none;
	}

	.spin + .gray {
		padding-right: 4px;
	}

	.turn {
		display: flex;
		align-items: center;
		gap: 8px;
		padding-right: 4px;
	}

	.rebar {
		display: flex;
		height: 165px;
		flex: none;
	}

	.splitter {
		width: 12px;
		padding-top: 4px;
		flex: none;
	}

	.splitter svg {
		display: block;
		width: 10px;
		height: 10px;
		margin-left: 1px;
	}

	.dots {
		height: 150px;
		margin: 2px 0 0 2px;
		background: radial-gradient(circle, #b0b0b0 1px, transparent 1px) 0 0 / 5px 5px;
	}

	.sheet {
		display: flex;
		flex-direction: column;
		flex: 1;
		min-width: 0;
		padding-top: 3px;
	}

	.bar.nav {
		height: 25px;
	}

	.nav .tool:not(:has(span)) {
		padding: 0 3px;
	}

	.nav .sep {
		margin: 0 1px;
	}

	.nav .drop {
		width: 8px;
	}

	.total {
		padding-left: 5px;
	}

	.grid {
		flex: 1;
		background: #fff;
		border-top: 1px solid #aaa;
		overflow: hidden;
	}

	table {
		width: 950px;
		table-layout: fixed;
		border-collapse: separate;
		border-spacing: 0;
		font: 12px/12px "Noto Sans CJK SC", sans-serif;
	}

	th,
	td {
		box-sizing: border-box;
		height: 19px;
		padding: 0 0 0 2px;
		border: solid #c0c0c0;
		border-width: 0 1px 1px 0;
		overflow: hidden;
		text-align: left;
	}

	th {
		padding: 0;
		text-align: center;
		font-weight: normal;
		background: linear-gradient(#fff, #f0f0f0);
	}

	thead th {
		height: 21px;
	}

	th.hot {
		background: #ffd28a;
		color: #600050;
	}

	.filled td {
		height: 29px;
		background: #ccffd9;
	}

	.filled.tall td {
		height: 34px;
	}

	.filled .current {
		background: #b4eedd;
	}

	td.edge {
		border-left: 1px solid #000;
	}

	.mono {
		font-family: "DejaVu Sans Mono", monospace;
		font-size: 10px;
	}

	.name,
	.desc {
		white-space: pre-line;
	}

	td.shape {
		padding: 0;
	}

	.shape svg {
		display: block;
		width: 200px;
		height: 28px;
	}

	.shape text {
		font: 10px "DejaVu Sans Mono", monospace;
		text-anchor: middle;
	}

	.shape .red {
		fill: #f00;
	}

	td.grade {
		padding: 0;
	}

	.grade svg {
		display: block;
		width: 12px;
		height: 12px;
		margin: 0 auto;
	}
</style>
